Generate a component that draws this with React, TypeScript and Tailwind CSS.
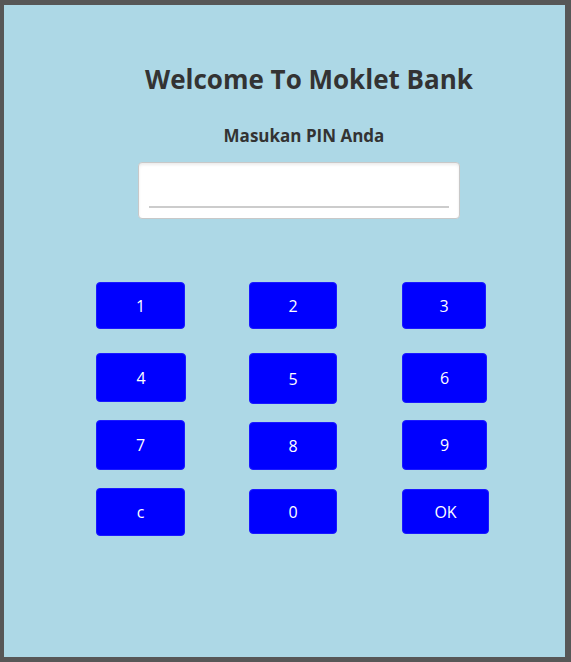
import React from 'react';

type Key = { label: string; w: string; h: string; mt: string };

const rows: { mt: string; keys: Key[] }[] = [
  {
    mt: 'mt-[63px]',
    keys: [
      { label: '1', w: 'w-[89px]', h: 'h-[47px]', mt: 'mt-0' },
      { label: '2', w: 'w-[88px]', h: 'h-[47px]', mt: 'mt-0' },
      { label: '3', w: 'w-[84px]', h: 'h-[47px]', mt: 'mt-0' },
    ],
  },
  {
    mt: 'mt-[24px]',
    keys: [
      { label: '4', w: 'w-[90px]', h: 'h-[49px]', mt: 'mt-0' },
      { label: '5', w: 'w-[88px]', h: 'h-[51px]', mt: 'mt-0' },
      { label: '6', w: 'w-[85px]', h: 'h-[50px]', mt: 'mt-0' },
    ],
  },
  {
    mt: 'mt-[16px]',
    keys: [
      { label: '7', w: 'w-[89px]', h: 'h-[50px]', mt: 'mt-0' },
      { label: '8', w: 'w-[88px]', h: 'h-[48px]', mt: 'mt-[2px]' },
      { label: '9', w: 'w-[85px]', h: 'h-[50px]', mt: 'mt-0' },
    ],
  },
  {
    mt: 'mt-[18px]',
    keys: [
      { label: 'c', w: 'w-[89px]', h: 'h-[48px]', mt: 'mt-0' },
      { label: '0', w: 'w-[88px]', h: 'h-[45px]', mt: 'mt-[1px]' },
      { label: 'OK', w: 'w-[87px]', h: 'h-[45px]', mt: 'mt-[1px]' },
    ],
  },
];

export default function App() {
  return (
    <div className="w-[571px] h-[662px] bg-[#575757] pt-[5px] pl-[4px] pr-[6px] pb-[5px] font-['Open_Sans',sans-serif]">
      <div className="w-full h-full bg-[#ADD8E6] overflow-hidden">
        {/* Header */}
        <h1 className="mt-[61px] pl-[49px] text-center text-[26px] leading-none font-bold text-[#333333]">
          Welcome To Moklet Bank
        </h1>
        <p className="mt-[35px] pl-[39px] text-center text-[17px] leading-none font-bold text-[#333333]">
          Masukan PIN Anda
        </p>

        {/* PIN input */}
        <div className="mt-[18px] ml-[134px] w-[322px] h-[57px] bg-white rounded-[4px] border border-[#c8c8c8] shadow-[inset_0_2px_3px_rgba(0,0,0,0.08)] px-[10px] pt-[43px]">
          <div className="h-[2px] bg-[#cccccc]"></div>
        </div>

        {/* Keypad */}
        <div className="ml-[92px]">
          {rows.map((row, i) => (
            <div key={i} className={`flex items-start ${row.mt}`}>
              {row.keys.map((k, j) => (
                <div key={k.label} className={j < 2 ? 'w-[153px]' : ''}>
                  <button
                    className={`${k.w} ${k.h} ${k.mt} flex items-center justify-center bg-[#0000FF] rounded-[4px] border border-[#1a1aff] text-white text-[16px]`}
                  >
                    {k.label}
                  </button>
                </div>
              ))}
            </div>
          ))}
        </div>
      </div>
    </div>
  );
}
